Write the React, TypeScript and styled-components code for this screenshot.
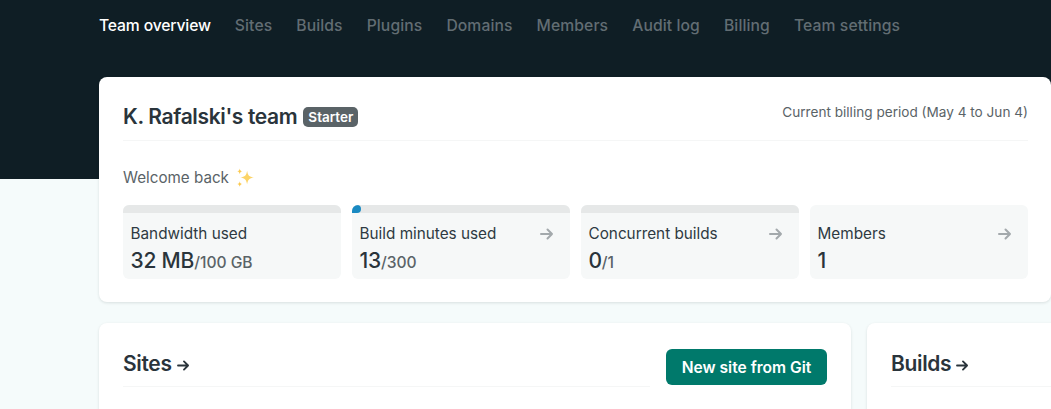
import React from 'react';
import styled, { createGlobalStyle } from 'styled-components';

const GlobalStyle = createGlobalStyle`
  html, body {
    margin: 0;
    padding: 0;
    height: 100%;
    overflow: hidden;
    background: #f5fbfb;
  }
  body {
    font-family: Inter, "Liberation Sans", sans-serif;
    color: #2e3a42;
    -webkit-font-smoothing: antialiased;
  }
`;

const Page = styled.div`
  width: 1051px;
  height: 409px;
  overflow: hidden;
`;

const Header = styled.header`
  height: 179px;
  background: #0f1e25;
  box-sizing: border-box;
  padding: 16px 0 0 99px;
`;

const Nav = styled.nav`
  display: flex;
  gap: 24px;
`;

const NavLink = styled.a<{ $active?: boolean }>`
  font-size: 15.7px;
  line-height: 20px;
  font-weight: 500;
  white-space: nowrap;
  letter-spacing: ${(p) => (p.$active ? '-0.15px' : '0.1px')};
  color: ${(p) => (p.$active ? '#ffffff' : '#626d73')};
`;

const Main = styled.main`
  margin-top: -102px;
  padding-left: 99px;
  display: flex;
  flex-direction: column;
  gap: 21px;
`;

const Card = styled.section`
  background: #fff;
  border-radius: 8px;
  box-sizing: border-box;
  box-shadow: 0 1px 3px rgba(14, 30, 37, 0.12);
`;

const TeamCard = styled(Card)`
  width: 952px;
  height: 225px;
  padding: 24px 23px 0 24px;
`;

const TeamHeader = styled.div`
  display: flex;
  align-items: center;
  justify-content: space-between;
  height: 40px;
  box-sizing: border-box;
  padding-bottom: 9px;
  border-bottom: 1px solid #f5f6f6;
`;

const TitleGroup = styled.div`
  display: flex;
  align-items: center;
  gap: 6px;
`;

const Title = styled.h1`
  margin: 0;
  padding-top: 2px;
  font-size: 21px;
  line-height: 28px;
  font-weight: 600;
  letter-spacing: -0.35px;
  color: #2a343b;
`;

const Badge = styled.span`
  background: #5a6367;
  color: #fff;
  border-radius: 5px;
  font-size: 13.5px;
  font-weight: 600;
  line-height: 20px;
  height: 20px;
  padding: 0 5px;
  margin-top: 1px;
`;

const Period = styled.span`
  font-size: 13.6px;
  line-height: 18px;
  color: #5a6367;
  margin-top: -9px;
`;

const Welcome = styled.p`
  margin: 27px 0 0;
  display: flex;
  align-items: center;
  gap: 6px;
  font-size: 15.2px;
  line-height: 20px;
  color: #5a6367;
`;

const Stats = styled.div`
  display: grid;
  grid-template-columns: repeat(4, 218px);
  gap: 11px;
  margin-top: 17px;
`;

const Stat = styled.div`
  position: relative;
  height: 74px;
  box-sizing: border-box;
  padding: 19px 8px 0 7.5px;
  background: #f6f8f8;
  border-radius: 6px;
  overflow: hidden;
`;

const Meter = styled.div`
  position: absolute;
  top: 0;
  left: 0;
  right: 0;
  height: 8px;
  background: #e6e8e8;
`;

const MeterFill = styled.div`
  height: 100%;
  background: #1a8ac2;
  border-radius: 0 8px 8px 0;
`;

const StatTop = styled.div`
  display: flex;
  align-items: center;
  justify-content: space-between;
  padding-right: 8px;
`;

const StatLabel = styled.span`
  font-size: 15.3px;
  line-height: 20px;
  color: #2e3a42;
`;

const StatArrow = styled.svg`
  width: 14px;
  height: 12px;
  color: #a3a9ac;
`;

const StatValue = styled.div`
  display: flex;
  align-items: baseline;
  margin-top: 4px;
  font-size: 21px;
  line-height: 26px;
  font-weight: 500;
  letter-spacing: -0.2px;
  color: #2a343b;
`;

const StatLimit = styled.span`
  font-size: 15.6px;
  font-weight: 500;
  letter-spacing: 0;
  color: #5a6367;
`;

const Row = styled.div`
  display: flex;
  gap: 16px;
  width: 1100px;
`;

const SectionCard = styled(Card)<{ $wide?: boolean }>`
  flex: ${(p) => (p.$wide ? '0 0 752px' : '1')};
  height: 200px;
  padding: 27px 24px 0;
`;

const SectionHeader = styled.div`
  display: flex;
  align-items: flex-start;
  justify-content: space-between;
`;

const SectionTitleWrap = styled.div`
  flex: 1;
  height: 36px;
  border-bottom: 1px solid #f5f6f6;
`;

const SectionTitle = styled.h2`
  margin: 0;
  display: flex;
  align-items: center;
  gap: 5px;
  font-size: 21px;
  line-height: 28px;
  font-weight: 600;
  letter-spacing: -0.35px;
  color: #2a343b;
`;

const TitleArrow = styled.svg`
  width: 13px;
  height: 11px;
  margin-top: 2px;
  color: #2a343b;
`;

const PrimaryButton = styled.button`
  flex: none;
  height: 36px;
  width: 161px;
  padding: 0;
  margin: -1px 0 0 16px;
  border: 0;
  border-radius: 6px;
  background: #00796b;
  color: #fff;
  font-family: inherit;
  font-size: 15.6px;
  font-weight: 600;
`;

const ArrowPath = () => (
  <path
    d="M1 6h11M7.500 1.500 12 6l-4.500 4.500"
    fill="none"
    stroke="currentColor"
    strokeWidth="2"
    strokeLinecap="round"
    strokeLinejoin="round"
  />
);

const Sparkles = () => (
  <svg width="20" height="20" viewBox="0 0 19 19" aria-hidden="true">
    <path d="M11.500 2.500c.7 4.400 2 5.800 6.500 6.500-4.500.7-5.800 2.100-6.500 6.500-.7-4.400-2-5.800-6.500-6.500 4.500-.7 5.800-2.100 6.500-6.500z" fill="#fcd468" />
    <path d="M4.500 .5c.3 1.700.8 2.300 2.500 2.700-1.700.4-2.200 1-2.500 2.700-.3-1.700-.8-2.300-2.500-2.700 1.700-.4 2.200-1 2.500-2.700z" fill="#fbc94f" />
    <path d="M4.500 12.500c.3 1.700.8 2.300 2.500 2.700-1.700.4-2.200 1-2.500 2.700-.3-1.700-.8-2.300-2.500-2.700 1.700-.4 2.200-1 2.500-2.700z" fill="#fbc94f" />
  </svg>
);

const navItems = ['Team overview', 'Sites', 'Builds', 'Plugins', 'Domains', 'Members', 'Audit log', 'Billing', 'Team settings'];

type StatItem = {
  label: string;
  value: string;
  limit?: string;
  meter?: number;
  link?: boolean;
};

const stats: StatItem[] = [
  { label: 'Bandwidth used', value: '32 MB', limit: '/100 GB', meter: 0 },
  { label: 'Build minutes used', value: '13', limit: '/300', meter: 4.3, link: true },
  { label: 'Concurrent builds', value: '0', limit: '/1', meter: 0, link: true },
  { label: 'Members', value: '1', link: true },
];

export default function App() {
  return (
    <Page>
      <GlobalStyle />
      <Header>
        <Nav>
          {navItems.map((item, i) => (
            <NavLink key={item} $active={i === 0}>
              {item}
            </NavLink>
          ))}
        </Nav>
      </Header>
      <Main>
        <TeamCard>
          <TeamHeader>
            <TitleGroup>
              <Title>K. Rafalski's team</Title>
              <Badge>Starter</Badge>
            </TitleGroup>
            <Period>Current billing period (May 4 to Jun 4)</Period>
          </TeamHeader>
          <Welcome>
            Welcome back <Sparkles />
          </Welcome>
          <Stats>
            {stats.map((s) => (
              <Stat key={s.label}>
                {s.meter !== undefined && (
                  <Meter>
                    {s.meter > 0 && <MeterFill style={{ width: `${s.meter}%` }} />}
                  </Meter>
                )}
                <StatTop>
                  <StatLabel>{s.label}</StatLabel>
                  {s.link && (
                    <StatArrow viewBox="0 0 14 12">
                      <ArrowPath />
                    </StatArrow>
                  )}
                </StatTop>
                <StatValue>
                  {s.value}
                  {s.limit && <StatLimit>{s.limit}</StatLimit>}
                </StatValue>
              </Stat>
            ))}
          </Stats>
        </TeamCard>
        <Row>
          <SectionCard $wide>
            <SectionHeader>
              <SectionTitleWrap>
                <SectionTitle>
                  Sites
                  <TitleArrow viewBox="0 0 14 12">
                    <ArrowPath />
                  </TitleArrow>
                </SectionTitle>
              </SectionTitleWrap>
              <PrimaryButton>New site from Git</PrimaryButton>
            </SectionHeader>
          </SectionCard>
          <SectionCard>
            <SectionHeader>
              <SectionTitleWrap>
                <SectionTitle>
                  Builds
                  <TitleArrow viewBox="0 0 14 12">
                    <ArrowPath />
                  </TitleArrow>
                </SectionTitle>
              </SectionTitleWrap>
            </SectionHeader>
          </SectionCard>
        </Row>
      </Main>
    </Page>
  );
}
